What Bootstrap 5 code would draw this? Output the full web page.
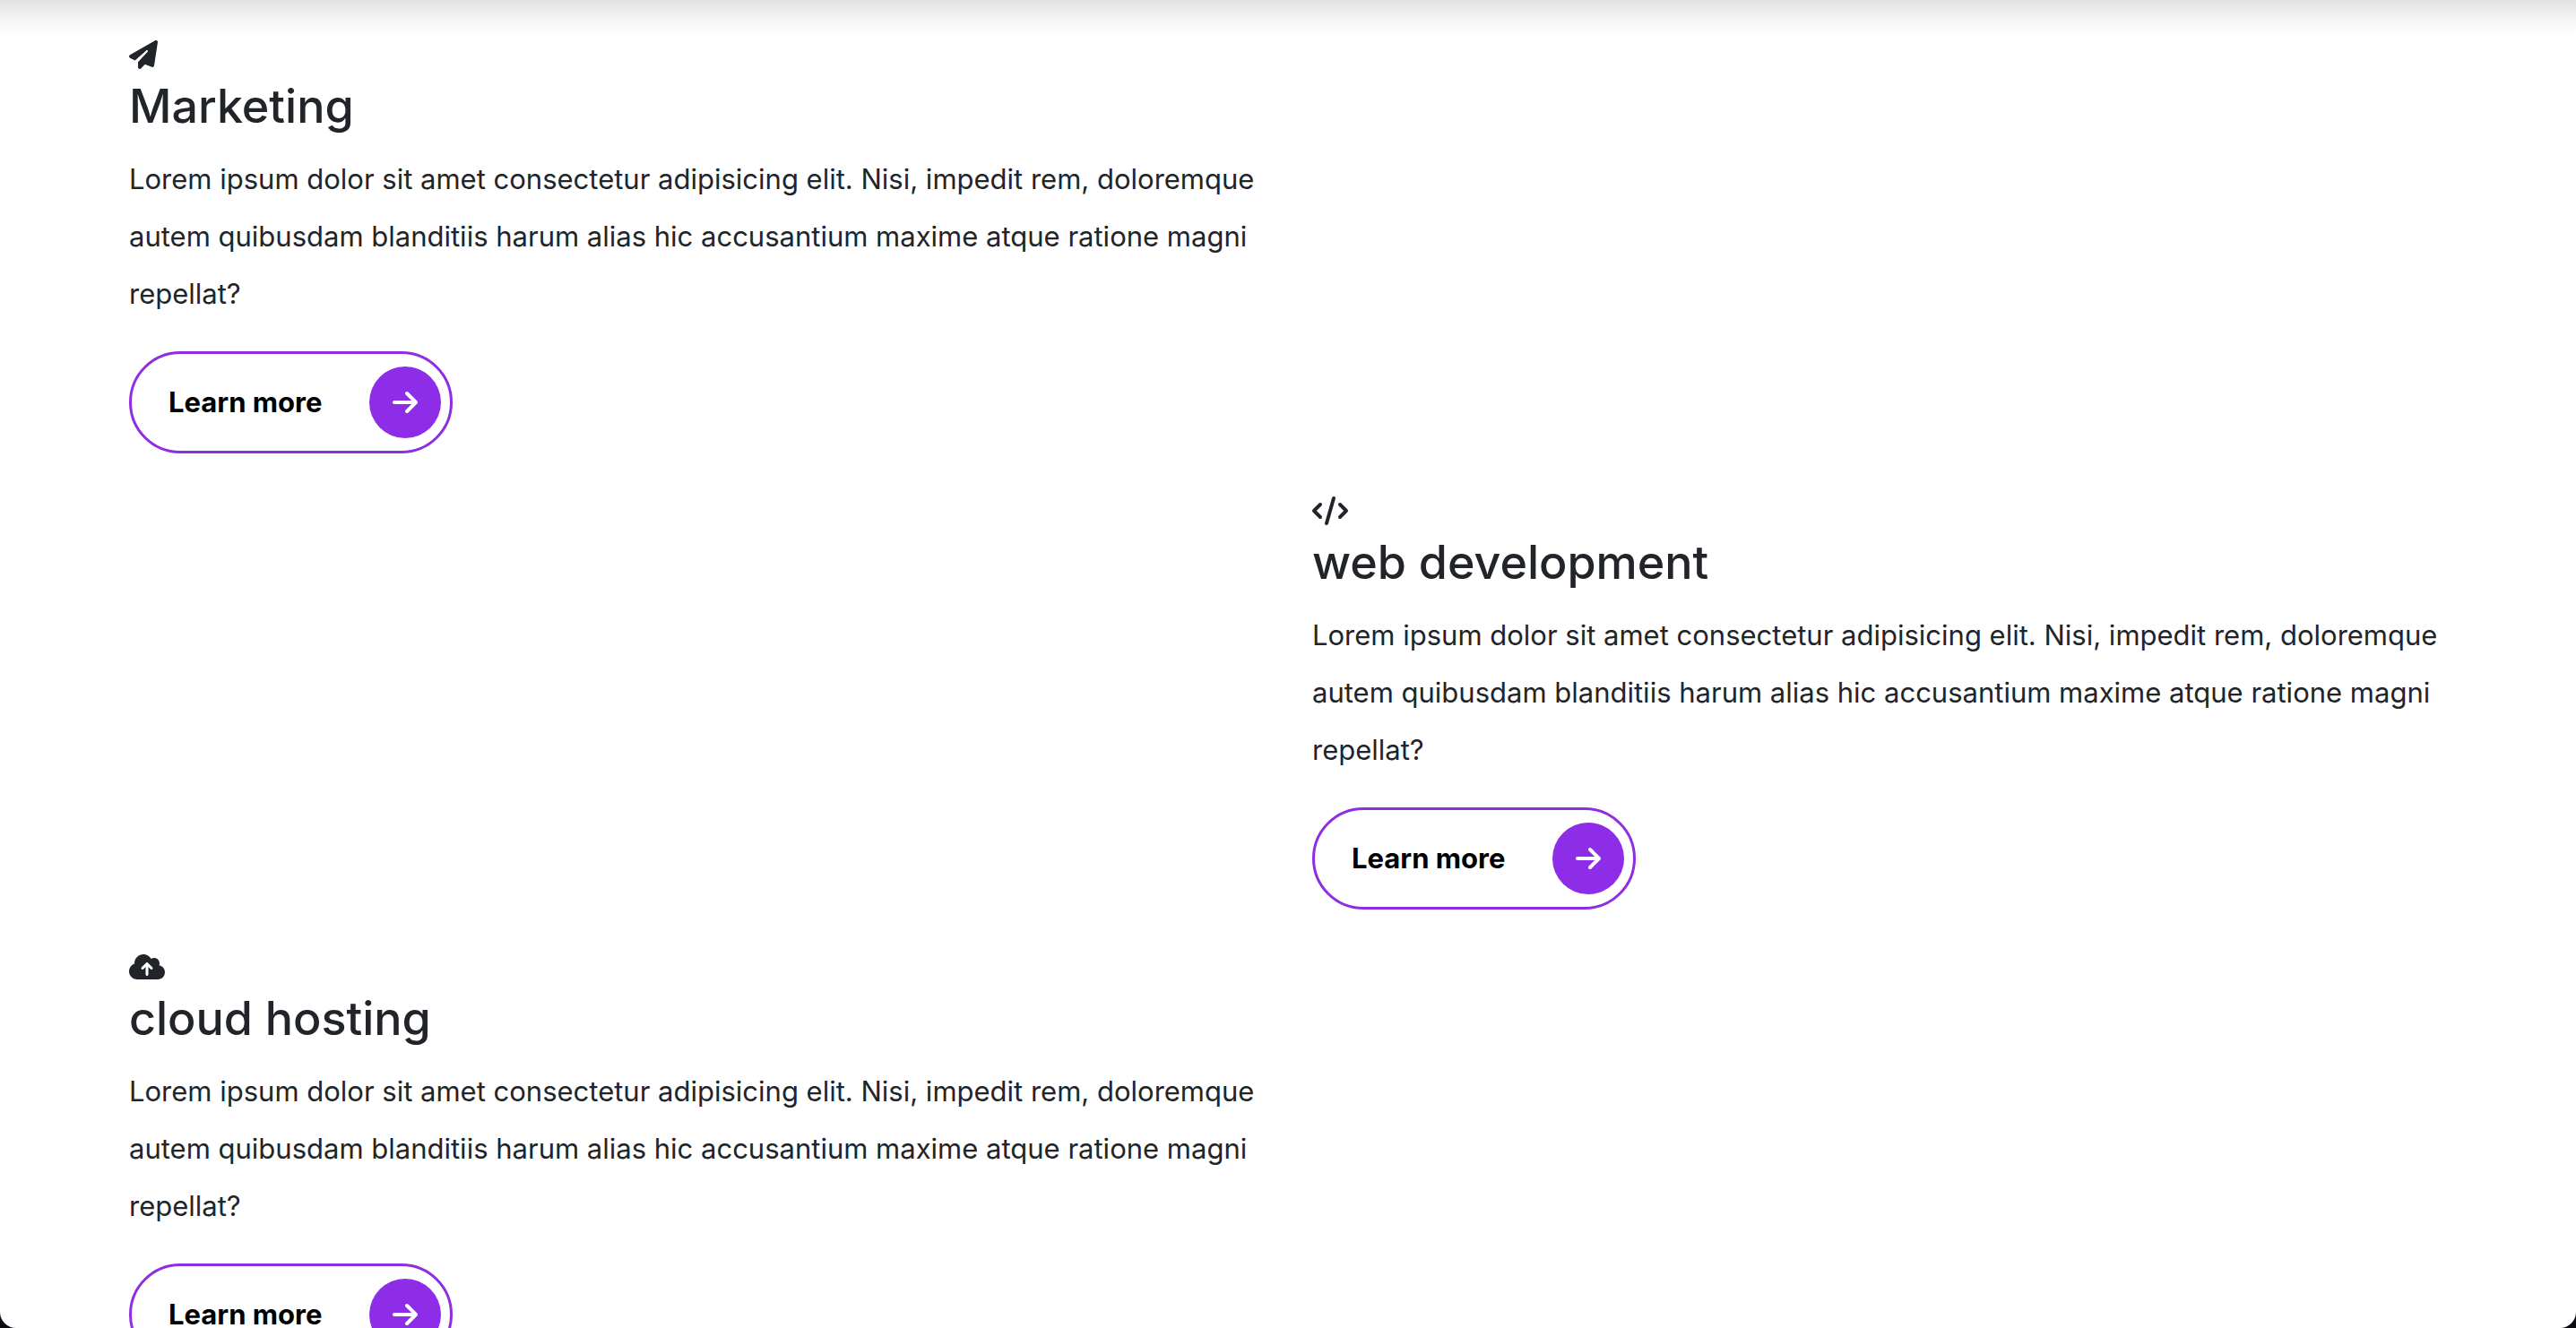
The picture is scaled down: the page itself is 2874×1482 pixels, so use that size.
<!DOCTYPE html>
<html lang="en">
<head>
<meta charset="utf-8">
<meta name="viewport" content="width=device-width, initial-scale=1">
<title>Services</title>
<link href="https://cdn.jsdelivr.net/npm/bootstrap@5.3.0/dist/css/bootstrap.min.css" rel="stylesheet">
<style>
  body { background: #0b0b12; font-family: Inter, sans-serif; font-size: 31px; color: #212529; }
  .window-frame { background: #fff; border-radius: 0 0 18px 18px; }
  /* soft shadow dropped by the header above the fold */
  .header-shade { height: 44px; background: linear-gradient(#e2e2e2, #ebebeb 25%, #f5f5f5 50%, #fcfcfc 75%, #fff); }
  .services { padding: 37px 138px 0 144px; }
  .services .row { --bs-gutter-x: 48px; }
  .service { padding-bottom: 40px; }
  .service-icon { height: 48px; }
  .service-icon svg { height: 32px; fill: currentColor; }
  .service h2 { font-size: 52px; line-height: 67px; margin-bottom: 16px; }
  .service p { line-height: 64px; margin-bottom: 32px; }
  .btn-learn { height: 114px; padding: 0 10px 0 41px; gap: 53px; border: 3px solid #8e2de2; border-radius: 57px; background: #fff; color: #000; font-size: 31px; font-weight: 700; }
  .btn-learn:hover { background: #f6edfe; border-color: #8e2de2; }
  .arrow-disc { width: 80px; height: 80px; background: #8e2de8; }
  .arrow-disc svg { height: 32px; fill: #fff; }
</style>
</head>
<body>
<svg class="d-none" aria-hidden="true">
  <symbol id="arrow" viewBox="0 0 448 512"><path d="M438.6 278.6c12.5-12.5 12.5-32.8 0-45.3l-160-160c-12.5-12.5-32.8-12.5-45.3 0s-12.5 32.8 0 45.3L338.8 224 32 224c-17.7 0-32 14.3-32 32s14.3 32 32 32l306.7 0L233.4 393.4c-12.5 12.5-12.5 32.8 0 45.3s32.8 12.5 45.3 0l160-160z"/></symbol>
</svg>
<div class="window-frame vh-100 overflow-hidden position-relative">
  <div class="header-shade position-absolute top-0 start-0 w-100"></div>
  <main class="services container-fluid position-relative">
    <div class="row">
      <section class="service col-6">
        <div class="service-icon d-flex align-items-center"><svg viewBox="0 0 512 512" aria-hidden="true"><path d="M498.1 5.6c10.1 7 15.4 19.1 13.5 31.2l-64 416c-1.5 9.7-7.4 18.2-16 23s-18.9 5.4-28 1.6L284 427.7l-68.5 74.1c-8.9 9.7-22.9 12.9-35.2 8.1S160 493.2 160 480V396.4c0-4 1.5-7.8 4.2-10.7L331.8 202.8c5.8-6.3 5.6-16-.4-22s-15.7-6.4-22-.7L106 360.8 17.7 316.6C7.1 311.3 .3 300.7 0 288.9s5.9-22.8 16.1-28.7l448-256c10.7-6.1 23.9-5.5 34 1.4z"/></svg></div>
        <h2>Marketing</h2>
        <p>Lorem ipsum dolor sit amet consectetur adipisicing elit. Nisi, impedit rem, doloremque autem quibusdam blanditiis harum alias hic accusantium maxime atque ratione magni repellat?</p>
        <button type="button" class="btn btn-learn d-inline-flex align-items-center">Learn more<span class="arrow-disc rounded-circle d-flex align-items-center justify-content-center"><svg viewBox="0 0 448 512" aria-hidden="true"><use href="#arrow"/></svg></span></button>
      </section>
    </div>
    <div class="row">
      <section class="service col-6 offset-6">
        <div class="service-icon d-flex align-items-center"><svg viewBox="0 0 640 512" aria-hidden="true"><path d="M392.8 1.2c-17-4.9-34.7 5-39.6 22l-128 448c-4.9 17 5 34.7 22 39.6s34.7-5 39.6-22l128-448c4.9-17-5-34.7-22-39.6zm80.6 120.1c-12.5 12.5-12.5 32.8 0 45.3L562.7 256l-89.4 89.4c-12.5 12.5-12.5 32.8 0 45.3s32.8 12.5 45.3 0l112-112c12.5-12.5 12.5-32.8 0-45.3l-112-112c-12.5-12.5-32.8-12.5-45.3 0zm-306.7 0c-12.5-12.5-32.8-12.5-45.3 0l-112 112c-12.5 12.5-12.5 32.8 0 45.3l112 112c12.5 12.5 32.8 12.5 45.3 0s12.5-32.8 0-45.3L77.3 256l89.4-89.4c12.5-12.5 12.5-32.8 0-45.3z"/></svg></div>
        <h2>web development</h2>
        <p>Lorem ipsum dolor sit amet consectetur adipisicing elit. Nisi, impedit rem, doloremque autem quibusdam blanditiis harum alias hic accusantium maxime atque ratione magni repellat?</p>
        <button type="button" class="btn btn-learn d-inline-flex align-items-center">Learn more<span class="arrow-disc rounded-circle d-flex align-items-center justify-content-center"><svg viewBox="0 0 448 512" aria-hidden="true"><use href="#arrow"/></svg></span></button>
      </section>
    </div>
    <div class="row">
      <section class="service col-6">
        <div class="service-icon d-flex align-items-center"><svg viewBox="0 0 640 512" aria-hidden="true"><path d="M144 480C64.5 480 0 415.5 0 336c0-62.8 40.2-116.2 96.2-135.9c-.1-2.7-.2-5.4-.2-8.1c0-88.4 71.6-160 160-160c59.3 0 111 32.2 138.7 80.2C409.9 102 428.3 96 448 96c53 0 96 43 96 96c0 12.2-2.3 23.8-6.4 34.6C596 238.4 640 290.1 640 352c0 70.7-57.3 128-128 128H144zm79-217c-9.4 9.4-9.4 24.6 0 33.9s24.6 9.4 33.9 0l39-39V392c0 13.3 10.7 24 24 24s24-10.7 24-24V257.9l39 39c9.4 9.4 24.6 9.4 33.9 0s9.4-24.6 0-33.9l-80-80c-9.4-9.4-24.6-9.4-33.9 0l-80 80z"/></svg></div>
        <h2>cloud hosting</h2>
        <p>Lorem ipsum dolor sit amet consectetur adipisicing elit. Nisi, impedit rem, doloremque autem quibusdam blanditiis harum alias hic accusantium maxime atque ratione magni repellat?</p>
        <button type="button" class="btn btn-learn d-inline-flex align-items-center">Learn more<span class="arrow-disc rounded-circle d-flex align-items-center justify-content-center"><svg viewBox="0 0 448 512" aria-hidden="true"><use href="#arrow"/></svg></span></button>
      </section>
    </div>
  </main>
</div>
<script src="https://cdn.jsdelivr.net/npm/bootstrap@5.3.0/dist/js/bootstrap.bundle.min.js"></script>
</body>
</html>
